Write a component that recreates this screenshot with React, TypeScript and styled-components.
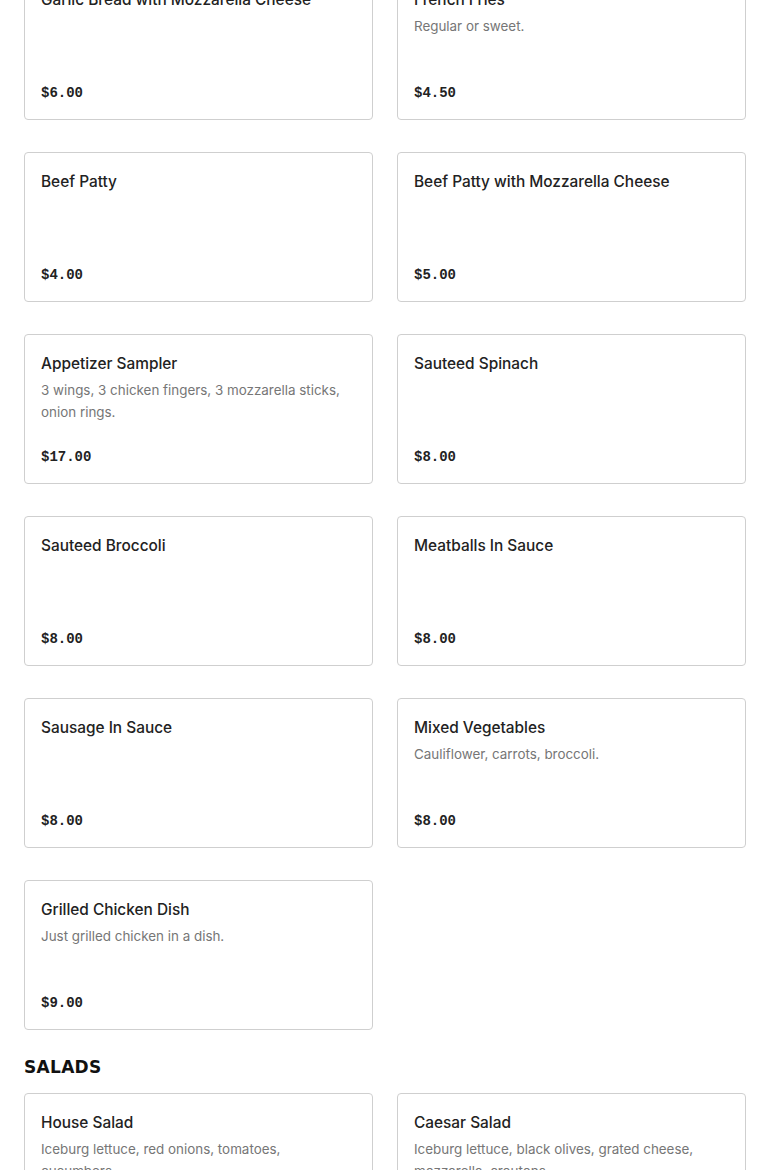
import React from "react";
import styled, { createGlobalStyle } from "styled-components";

const Global = createGlobalStyle`
  html, body { margin: 0; padding: 0; background: #ffffff; }
  body { font-family: "Inter", "Liberation Sans", sans-serif; color: #222222; overflow: hidden; }
`;

const Page = styled.main`
  margin-top: -30px;
  padding: 0 24px;
`;

const Section = styled.section`
  display: flex;
  flex-direction: column;
`;

const SectionTitle = styled.h2`
  margin: 25px 0 14px;
  font-family: "DejaVu Sans", "Liberation Sans", sans-serif;
  font-weight: 700;
  font-size: 17px;
  line-height: 24px;
  letter-spacing: 0.3px;
  color: #111111;
`;

const Grid = styled.div`
  display: grid;
  grid-template-columns: 1fr 1fr;
  column-gap: 24px;
  row-gap: 32px;
`;

const Card = styled.article`
  box-sizing: border-box;
  height: 150px;
  border: 1px solid #cfcfcf;
  border-radius: 4px;
  background: #fff;
  padding: 18px 16px 16px;
  display: flex;
  flex-direction: column;
`;

const Name = styled.h3`
  margin: 0;
  font-family: "Inter", "Liberation Sans", sans-serif;
  font-weight: 500;
  font-size: 15.4px;
  line-height: 22px;
  color: #222222;
`;

const Desc = styled.p`
  margin: 4px 0 0;
  font-family: "Inter", "Liberation Sans", sans-serif;
  font-size: 13.4px;
  line-height: 22px;
  color: #767676;
`;

const Price = styled.div`
  margin-top: auto;
  font-family: "Liberation Mono", "DejaVu Sans Mono", monospace;
  font-weight: 700;
  font-size: 14px;
  line-height: 20px;
  color: #222222;
`;

type Item = { name: string; desc?: string; price: string };

const appetizers: Item[] = [
  { name: "Garlic Bread with Mozzarella Cheese", price: "$6.00" },
  { name: "French Fries", desc: "Regular or sweet.", price: "$4.50" },
  { name: "Beef Patty", price: "$4.00" },
  { name: "Beef Patty with Mozzarella Cheese", price: "$5.00" },
  {
    name: "Appetizer Sampler",
    desc: "3 wings, 3 chicken fingers, 3 mozzarella sticks, onion rings.",
    price: "$17.00",
  },
  { name: "Sauteed Spinach", price: "$8.00" },
  { name: "Sauteed Broccoli", price: "$8.00" },
  { name: "Meatballs In Sauce", price: "$8.00" },
  { name: "Sausage In Sauce", price: "$8.00" },
  { name: "Mixed Vegetables", desc: "Cauliflower, carrots, broccoli.", price: "$8.00" },
  { name: "Grilled Chicken Dish", desc: "Just grilled chicken in a dish.", price: "$9.00" },
];

const salads: Item[] = [
  {
    name: "House Salad",
    desc: "Iceburg lettuce, red onions, tomatoes, cucumbers.",
    price: "$8.00",
  },
  {
    name: "Caesar Salad",
    desc: "Iceburg lettuce, black olives, grated cheese, mozzarella, croutons.",
    price: "$9.00",
  },
];

const MenuCard = ({ item }: { item: Item }) => (
  <Card>
    <Name>{item.name}</Name>
    {item.desc && <Desc>{item.desc}</Desc>}
    <Price>{item.price}</Price>
  </Card>
);

export default function App() {
  return (
    <>
      <Global />
      <Page>
        <Section>
          <Grid>
            {appetizers.map((it) => (
              <MenuCard key={it.name} item={it} />
            ))}
          </Grid>
        </Section>
        <Section>
          <SectionTitle>SALADS</SectionTitle>
          <Grid>
            {salads.map((it) => (
              <MenuCard key={it.name} item={it} />
            ))}
          </Grid>
        </Section>
      </Page>
    </>
  );
}
